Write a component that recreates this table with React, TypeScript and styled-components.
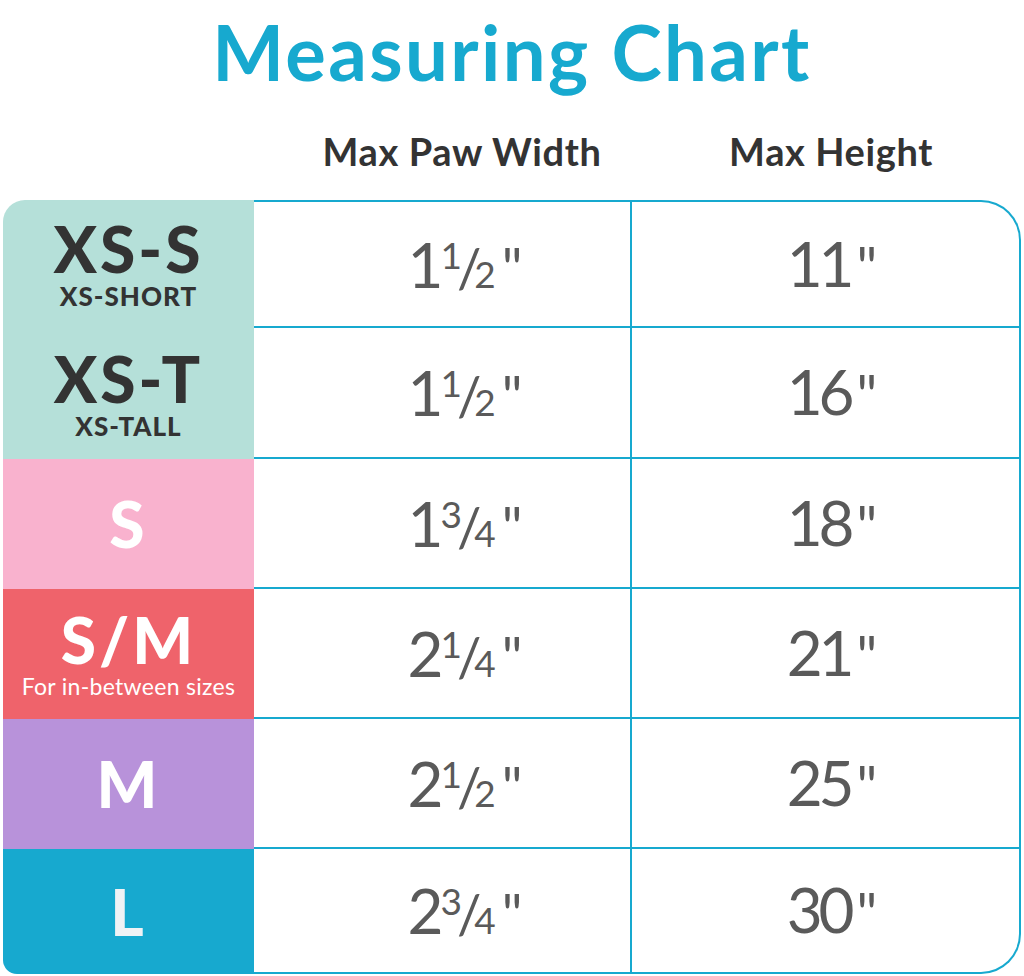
import React from "react";
import styled, { createGlobalStyle } from "styled-components";

const Global = createGlobalStyle`
  html, body { margin: 0; padding: 0; background: #ffffff; }
  body { font-family: Lato, "Open Sans", Arial, sans-serif; }
`;

const BLUE = "#17a9cf";

const Page = styled.div`
  width: 1024px;
  height: 976px;
  box-sizing: border-box;
  padding: 14px 3px 0 3px;
  overflow: hidden;
`;

const Title = styled.h1`
  margin: 0;
  text-align: center;
  font-family: Lato, sans-serif;
  font-weight: 700;
  font-size: 76px;
  line-height: 76px;
  color: ${BLUE};
  letter-spacing: 2.4px;
`;

const HeaderRow = styled.div`
  display: grid;
  grid-template-columns: 251px 378px 1fr;
  margin-top: 42px;
  height: 38px;
  margin-bottom: 30px;
`;

const HeaderCell = styled.div<{ $shift: number }>`
  text-align: center;
  padding-left: ${(p) => p.$shift}px;
  font-family: Lato, sans-serif;
  font-weight: 700;
  font-size: 38px;
  line-height: 38px;
  color: #333333;
  letter-spacing: 0.6px;
  white-space: nowrap;
`;

const Chart = styled.div`
  display: flex;
  height: 774px;
`;

const SizeColumn = styled.div`
  width: 251px;
  display: flex;
  flex-direction: column;
  border-radius: 22px 0 0 14px;
  overflow: hidden;
`;

const SizeCell = styled.div<{ $bg: string; $fg: string; $h: number }>`
  height: ${(p) => p.$h}px;
  background: ${(p) => p.$bg};
  color: ${(p) => p.$fg};
  display: flex;
  flex-direction: column;
  align-items: center;
  justify-content: center;
  font-family: Lato, sans-serif;
`;

const SizeName = styled.div`
  font-weight: 900;
  font-size: 64px;
  line-height: 60px;
  letter-spacing: 3px;
`;

const SizeSub = styled.div<{ $bold: boolean }>`
  font-weight: ${(p) => (p.$bold ? 900 : 400)};
  font-size: ${(p) => (p.$bold ? 26 : 23)}px;
  line-height: ${(p) => (p.$bold ? 26 : 24)}px;
  letter-spacing: ${(p) => (p.$bold ? 1 : 0.3)}px;
  margin-top: 4px;
  white-space: nowrap;
`;

const ValuePanel = styled.div`
  flex: 1;
  border: 2px solid ${BLUE};
  border-left: none;
  border-radius: 0 40px 40px 0;
  display: flex;
  flex-direction: column;
`;

const ValueRow = styled.div<{ $h: number; $last: boolean }>`
  box-sizing: border-box;
  height: ${(p) => p.$h}px;
  display: grid;
  grid-template-columns: 378px 1fr;
  border-bottom: ${(p) => (p.$last ? "none" : `2px solid ${BLUE}`)};
`;

const ValueCell = styled.div<{ $divider: boolean; $shift: number }>`
  display: flex;
  align-items: center;
  justify-content: center;
  padding-left: ${(p) => p.$shift}px;
  border-right: ${(p) => (p.$divider ? `2px solid ${BLUE}` : "none")};
  font-family: Lato, sans-serif;
  font-weight: 400;
  font-size: 62px;
  line-height: 62px;
  color: #5a5a5a;
  white-space: nowrap;
`;

const Digits = styled.span`
  letter-spacing: -4px;
`;

const Num = styled.span`
  font-size: 37px;
  vertical-align: 19px;
  margin-left: 1px;
`;

const Slash = styled.span`
  font-size: 54px;
  margin: 0 -7px 0 -5px;
`;

const Den = styled.span`
  font-size: 37px;
`;

const Quote = styled.span`
  margin-left: 6px;
  font-size: 56px;
`;

type Row = {
  name: string;
  sub?: string;
  subBold?: boolean;
  bg: string;
  fg: string;
  left: number;
  right: number;
  whole: string;
  num?: string;
  den?: string;
  height: string;
};

const rows: Row[] = [
  { name: "XS-S", sub: "XS-SHORT", subBold: true, bg: "#b5e0d9", fg: "#333333", left: 128, right: 126, whole: "1", num: "1", den: "2", height: "11" },
  { name: "XS-T", sub: "XS-TALL", subBold: true, bg: "#b5e0d9", fg: "#333333", left: 131, right: 131, whole: "1", num: "1", den: "2", height: "16" },
  { name: "S", bg: "#f9b2ce", fg: "#ffffff", left: 130, right: 130, whole: "1", num: "3", den: "4", height: "18" },
  { name: "S/M", sub: "For in-between sizes", subBold: false, bg: "#ef636b", fg: "#ffffff", left: 130, right: 130, whole: "2", num: "1", den: "4", height: "21" },
  { name: "M", bg: "#b892da", fg: "#ffffff", left: 130, right: 130, whole: "2", num: "1", den: "2", height: "25" },
  { name: "L", bg: "#17a9cf", fg: "#f0f2f5", left: 125, right: 123, whole: "2", num: "3", den: "4", height: "30" },
];

const Measure: React.FC<{ whole: string; num?: string; den?: string }> = ({ whole, num, den }) => (
  <span>
    <Digits>{whole}</Digits>
    {num && (
      <>
        <Num>{num}</Num>
        <Slash>/</Slash>
        <Den>{den}</Den>
      </>
    )}
    <Quote>"</Quote>
  </span>
);

export default function App() {
  return (
    <>
      <Global />
      <Page>
        <Title>Measuring Chart</Title>
        <HeaderRow>
          <div />
          <HeaderCell $shift={38}>Max Paw Width</HeaderCell>
          <HeaderCell $shift={9}>Max Height</HeaderCell>
        </HeaderRow>
        <Chart>
          <SizeColumn>
            {rows.map((r) => (
              <SizeCell key={r.name} $bg={r.bg} $fg={r.fg} $h={r.left}>
                <SizeName>{r.name}</SizeName>
                {r.sub && <SizeSub $bold={!!r.subBold}>{r.sub}</SizeSub>}
              </SizeCell>
            ))}
          </SizeColumn>
          <ValuePanel>
            {rows.map((r, i) => (
              <ValueRow key={r.name} $h={r.right} $last={i === rows.length - 1}>
                <ValueCell $divider $shift={46}>
                  <Measure whole={r.whole} num={r.num} den={r.den} />
                </ValueCell>
                <ValueCell $divider={false} $shift={13}>
                  <Measure whole={r.height} />
                </ValueCell>
              </ValueRow>
            ))}
          </ValuePanel>
        </Chart>
      </Page>
    </>
  );
}
